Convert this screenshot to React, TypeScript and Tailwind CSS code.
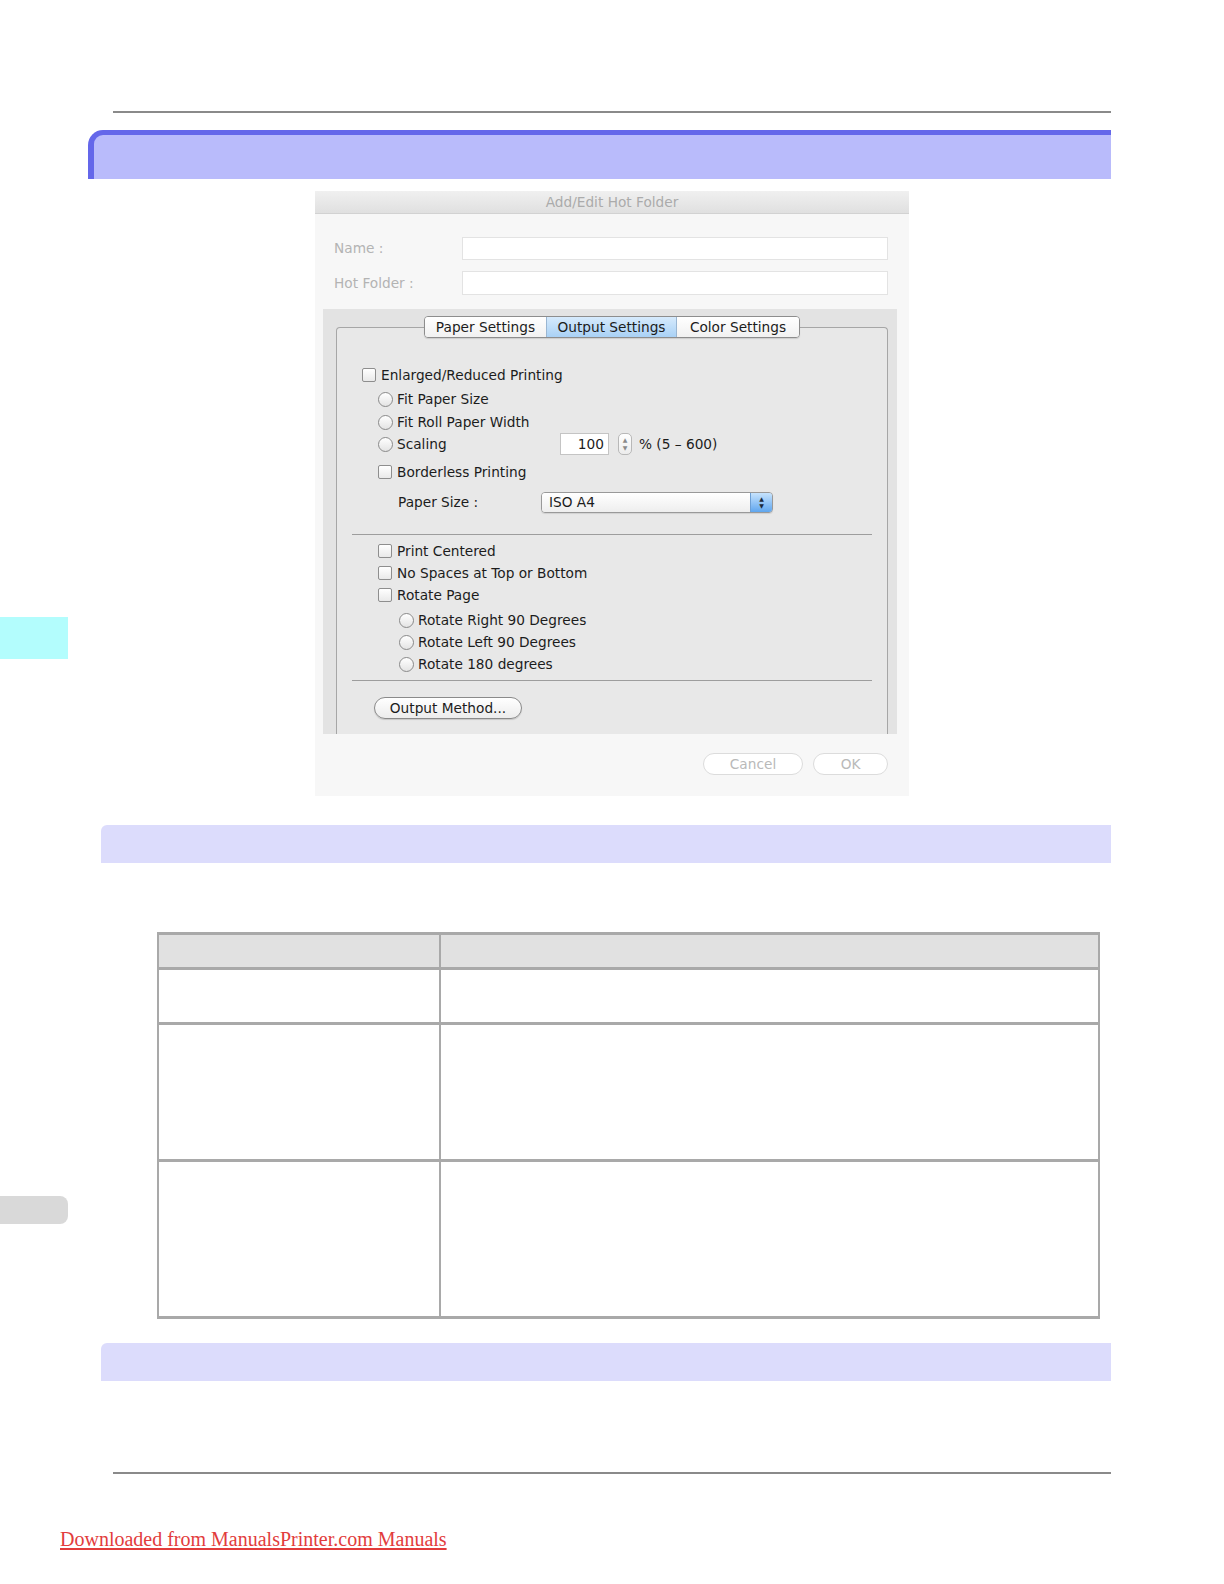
import React from 'react';

const ui = { fontFamily: '"DejaVu Sans", "Liberation Sans", sans-serif' };

const CheckBox = () => (
  <span className="inline-block w-[14px] h-[14px] shrink-0 rounded-[2px] border border-[#8e8e8e] bg-linear-to-b from-white to-[#e9e9e9]" />
);

const Radio = () => (
  <span className="inline-block w-[15px] h-[15px] shrink-0 rounded-full border border-[#8a8a8a] bg-linear-to-b from-white to-[#e4e4e4]" />
);

const CheckRow = ({ label, pl, mt = '' }: { label: string; pl: string; mt?: string }) => (
  <div className={`flex items-center h-[22px] ${pl} ${mt}`}>
    <CheckBox />
    <span className="ml-[5px]">{label}</span>
  </div>
);

const RadioRow = ({ label, pl, mt = '' }: { label: string; pl: string; mt?: string }) => (
  <div className={`flex items-center h-[22px] ${pl} ${mt}`}>
    <Radio />
    <span className="ml-[4px]">{label}</span>
  </div>
);

const Dialog = () => (
  <div className="w-[594px] h-[605px] ml-[315px] mt-[12px] bg-[#f7f7f7] flex flex-col text-[13.7px]" style={ui}>
    {/* title bar */}
    <div className="h-[23px] shrink-0 flex items-center justify-center bg-linear-to-b from-[#f0f0f0] to-[#e0e0e0] border-b border-[#d2d2d2] text-[#ababab]">
      Add/Edit Hot Folder
    </div>

    <div className="flex items-center mt-[23px] h-[23px]">
      <span className="w-[147px] pl-[19px] text-[#b3b3b3]">Name :</span>
      <div className="w-[426px] h-[23px] bg-white border border-[#e3e3e3]" />
    </div>
    <div className="flex items-center mt-[11px] h-[24px]">
      <span className="w-[147px] pl-[19px] text-[#b3b3b3]">Hot Folder :</span>
      <div className="w-[426px] h-[24px] bg-white border border-[#e3e3e3]" />
    </div>

    {/* highlighted tab panel */}
    <div className="mt-[14px] ml-[8px] w-[574px] h-[425px] bg-[#e3e3e3] overflow-hidden flex flex-col pt-[7px] text-[#1c1c1c]">
      <div className="relative z-10 flex justify-center pl-[4px]">
        <div className="flex h-[22px] rounded-[4px] border border-[#8d8d8d] overflow-hidden shadow-[0_1px_1px_rgba(0,0,0,0.12)]">
          <div className="w-[121px] flex items-center justify-center bg-linear-to-b from-white to-[#f1f1f1]">Paper Settings</div>
          <div className="w-[131px] flex items-center justify-center border-x border-[#9ab6d2] bg-linear-to-b from-[#d6eafc] to-[#a9d1f5]">Output Settings</div>
          <div className="w-[122px] flex items-center justify-center bg-linear-to-b from-white to-[#f1f1f1]">Color Settings</div>
        </div>
      </div>

      <div className="-mt-[11px] ml-[13px] mr-[9px] flex-1 border-t border-x border-[#a6a6a6] rounded-t-[4px] bg-[#e8e8e8] pt-[36px]">
        <CheckRow label="Enlarged/Reduced Printing" pl="pl-[25px]" />
        <RadioRow label="Fit Paper Size" pl="pl-[41px]" mt="mt-[2px]" />
        <RadioRow label="Fit Roll Paper Width" pl="pl-[41px]" mt="mt-[1px]" />
        <div className="flex items-center h-[22px] pl-[41px]">
          <Radio />
          <span className="ml-[4px] w-[163px]">Scaling</span>
          <div className="w-[49px] h-[22px] bg-white border border-[#c4c4c4] flex items-center justify-end pr-[4px]">100</div>
          <div className="ml-[9px] w-[14px] h-[22px] rounded-[5px] border border-[#b8b8b8] bg-linear-to-b from-white to-[#ececec] flex flex-col items-center justify-center text-[6px] leading-[8px] text-[#8a8a8a]">
            <span>▲</span>
            <span>▼</span>
          </div>
          <span className="ml-[7px]">% (5 – 600)</span>
        </div>
        <CheckRow label="Borderless Printing" pl="pl-[41px]" mt="mt-[6px]" />
        <div className="flex items-center h-[22px] mt-[8px] pl-[61px]">
          <span className="w-[143px]">Paper Size :</span>
          <div className="w-[232px] h-[21px] flex rounded-[4px] border border-[#999] overflow-hidden shadow-[0_1px_1px_rgba(0,0,0,0.1)]">
            <div className="flex-1 flex items-center pl-[7px] bg-linear-to-b from-white to-[#eeeeee]">ISO A4</div>
            <div className="w-[22px] flex flex-col items-center justify-center border-l border-[#6d9fd4] bg-linear-to-b from-[#c6e3fd] to-[#5fa6ee] text-[6px] leading-[7px] text-[#1b2a3a]">
              <span>▲</span>
              <span>▼</span>
            </div>
          </div>
        </div>

        <div className="mt-[21px] mx-[15px] border-t border-[#9d9d9d]" />

        <CheckRow label="Print Centered" pl="pl-[41px]" mt="mt-[5px]" />
        <CheckRow label="No Spaces at Top or Bottom" pl="pl-[41px]" />
        <CheckRow label="Rotate Page" pl="pl-[41px]" />
        <RadioRow label="Rotate Right 90 Degrees" pl="pl-[62px]" mt="mt-[3px]" />
        <RadioRow label="Rotate Left 90 Degrees" pl="pl-[62px]" />
        <RadioRow label="Rotate 180 degrees" pl="pl-[62px]" />

        <div className="mt-[5px] mx-[15px] border-t border-[#9d9d9d]" />

        <div className="mt-[16px] ml-[37px] w-[148px] h-[22px] rounded-full border border-[#8a8a8a] bg-linear-to-b from-white to-[#ececec] flex items-center justify-center shadow-[0_1px_1px_rgba(0,0,0,0.15)]">
          Output Method...
        </div>
      </div>
    </div>

    {/* faded buttons */}
    <div className="flex justify-end gap-[10px] pt-[19px] pr-[21px] text-[#b9b9b9]">
      <div className="w-[100px] h-[22px] rounded-full border border-[#dcdcdc] bg-white flex items-center justify-center">Cancel</div>
      <div className="w-[75px] h-[22px] rounded-full border border-[#dcdcdc] bg-white flex items-center justify-center">OK</div>
    </div>
  </div>
);

const SubBar = ({ mt }: { mt: string }) => (
  <div className={`${mt} ml-[101px] w-[1010px] h-[38px] bg-[#dcdcfc] rounded-tl-[6px]`} />
);

const App: React.FC = () => {
  return (
    <div className="relative w-[1224px] h-[1584px] bg-white overflow-hidden">
      {/* side tabs in the margin */}
      <div className="absolute left-0 top-[617px] w-[68px] h-[42px] bg-[#b3fdfd]" />
      <div className="absolute left-0 top-[1196px] w-[68px] h-[28px] bg-[#d9d9d9] rounded-r-[8px]" />

      <div className="pt-[111px]">
        <div className="ml-[113px] w-[998px] border-t-2 border-[#8a8a8a]" />

        {/* chapter header bar */}
        <div className="mt-[17px] ml-[88px] w-[1023px] h-[49px] bg-[#6467ea] rounded-tl-[15px] pl-[6px] pt-[5px]">
          <div className="h-full bg-[#b9bbfb] rounded-tl-[9px]" />
        </div>

        <Dialog />

        <SubBar mt="mt-[29px]" />

        {/* table */}
        <div className="mt-[69px] ml-[157px] w-[943px] border-x-2 border-[#a9a9a9]">
          <div className="flex h-[35px] border-t-[3px] border-[#a9a9a9] bg-[#e1e1e1]">
            <div className="w-[282px] border-r-2 border-[#a9a9a9]" />
            <div className="flex-1" />
          </div>
          <div className="flex h-[55px] border-t-[3px] border-[#a9a9a9]">
            <div className="w-[282px] border-r-2 border-[#a9a9a9]" />
            <div className="flex-1" />
          </div>
          <div className="flex h-[137px] border-t-[3px] border-[#a9a9a9]">
            <div className="w-[282px] border-r-2 border-[#a9a9a9]" />
            <div className="flex-1" />
          </div>
          <div className="flex h-[160px] border-y-[3px] border-[#a9a9a9]">
            <div className="w-[282px] border-r-2 border-[#a9a9a9]" />
            <div className="flex-1" />
          </div>
        </div>

        <SubBar mt="mt-[24px]" />

        <div className="mt-[91px] ml-[113px] w-[998px] border-t-2 border-[#8a8a8a]" />

        <div className="mt-[53px] ml-[60px]">
          <a
            className="text-[20px] leading-[24px] text-[#e23c3c] underline underline-offset-2"
            style={{ fontFamily: '"Liberation Serif", "Times New Roman", serif' }}
          >
            Downloaded from ManualsPrinter.com Manuals
          </a>
        </div>
      </div>
    </div>
  );
};

export default App;
